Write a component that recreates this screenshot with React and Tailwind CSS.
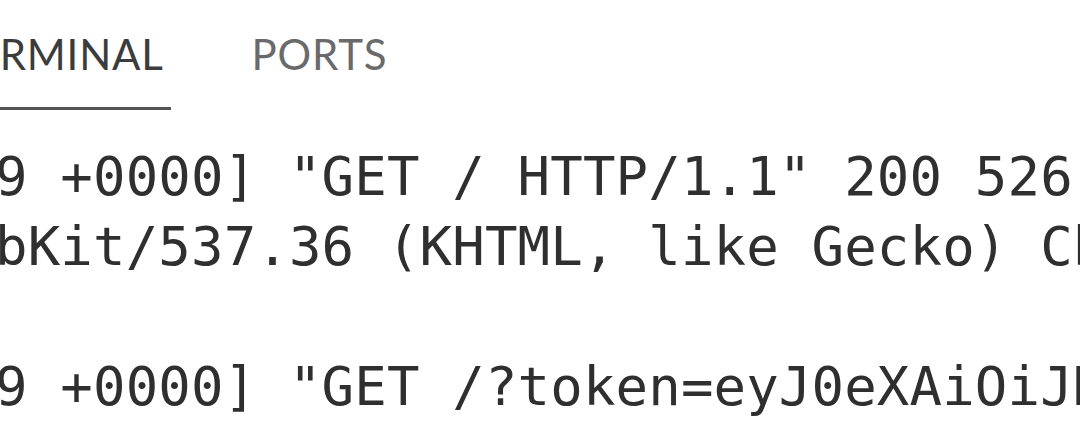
const LINES = [
  '9 +0000] "GET / HTTP/1.1" 200 526 "-" "Mozilla/5.0 (X11; Linux x86_64) AppleWe',
  'bKit/537.36 (KHTML, like Gecko) Chrome/120.0.0.0 Safari/537.36"',
  "",
  '9 +0000] "GET /?token=eyJ0eXAiOiJKV1QiLCJhbGciOiJIUzI1NiJ9 HTTP/1.1" 200',
];

export default function App() {
  return (
    <div className="w-[1080px] h-[434px] overflow-hidden bg-white">
      {/* panel tabs */}
      <div className="flex items-start ml-[-58px] pt-[33px] font-['Lato','Noto_Sans',sans-serif] text-[42px] leading-[42px]">
        <div className="flex flex-col px-[7px]">
          <span className="text-[#3c3c3c] tracking-[0.8px]">TERMINAL</span>
          <div className="mt-[32px] h-[3px] bg-[#555555] -mx-[7px]" />
        </div>
        <div className="ml-[74px] px-[7px]">
          <span className="text-[#6a6a6a] tracking-[0.8px]">PORTS</span>
        </div>
      </div>

      {/* terminal output */}
      <div className="mt-[32px] ml-[-5px] font-['DejaVu_Sans_Mono',monospace] text-[54px] leading-[70px] tracking-[0.15px] text-[#2f2f2f] whitespace-pre">
        {LINES.map((line, i) => (
          <div key={i} className="h-[70px]">
            {line}
          </div>
        ))}
      </div>
    </div>
  );
}
